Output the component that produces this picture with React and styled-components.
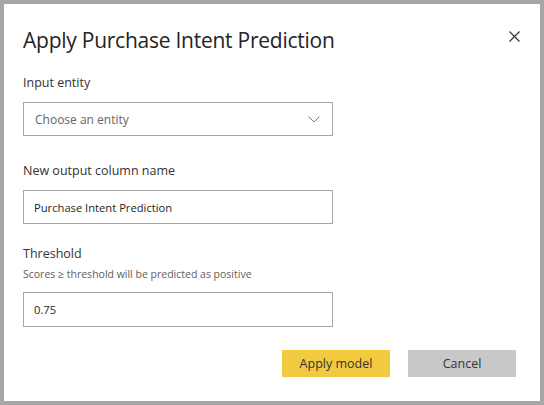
import React from "react";
import styled, { createGlobalStyle } from "styled-components";

const GlobalStyle = createGlobalStyle`
  html, body {
    margin: 0;
    padding: 0;
    background: #ffffff;
  }
  * { box-sizing: border-box; }
`;

const Dialog = styled.div`
  width: 544px;
  height: 405px;
  border: 4px solid #a6a6a6;
  background: #ffffff;
  padding: 21px 16px 0 19px;
  display: flex;
  flex-direction: column;
  font-family: "Open Sans", "Noto Sans", sans-serif;
  color: #252423;
`;

const Header = styled.div`
  display: flex;
  justify-content: space-between;
  align-items: flex-start;
`;

const Title = styled.h1`
  margin: 0;
  font-size: 21px;
  font-weight: 400;
  line-height: 30px;
  letter-spacing: -0.25px;
  color: #252423;
`;

const CloseButton = styled.button`
  border: none;
  background: transparent;
  padding: 0;
  width: 20px;
  height: 20px;
  margin-top: 1px;
  display: flex;
  align-items: center;
  justify-content: center;
  color: #333;
  cursor: pointer;
`;

const Field = styled.div`
  display: flex;
  flex-direction: column;
  width: 310px;
  margin-top: ${(p) => p.$top}px;
`;

const Label = styled.label`
  font-size: 12.5px;
  font-weight: 500;
  line-height: 20px;
  color: #333;
`;

const Hint = styled.div`
  font-size: 10.5px;
  line-height: 16px;
  color: #605e5c;
  margin-top: 2px;
`;

const Box = styled.div`
  width: 310px;
  height: ${(p) => p.$h}px;
  margin-top: ${(p) => p.$gap}px;
  border: 1px solid #a6a6a6;
  background: #fff;
  display: flex;
  align-items: center;
  justify-content: space-between;
  padding: 0 12px 0 ${(p) => p.$pl}px;
`;

const Placeholder = styled.span`
  font-size: 12px;
  color: #666;
`;

const Value = styled.span`
  font-size: 11.2px;
  color: #252423;
`;

const Footer = styled.div`
  display: flex;
  justify-content: flex-end;
  gap: 18px;
  margin-top: 23px;
  padding-right: 8px;
`;

const Button = styled.button`
  width: 108px;
  height: 27px;
  border: none;
  background: ${(p) => (p.$primary ? "#f2ca3f" : "#c8c8c8")};
  color: #333;
  font-family: "Open Sans", "Noto Sans", sans-serif;
  font-size: 12.5px;
  padding: 0;
  cursor: pointer;
`;

const Chevron = () => (
  <svg width="12" height="7" viewBox="0 0 12 7" fill="none">
    <path d="M0.6 0.7 L6 5.9 L11.4 0.7" stroke="#777" strokeWidth="1" />
  </svg>
);

const CloseIcon = () => (
  <svg width="11" height="11" viewBox="0 0 11 11" fill="none">
    <path d="M0.5 0.5 L10.5 10.5 M10.5 0.5 L0.5 10.5" stroke="#333" strokeWidth="1.2" />
  </svg>
);

export default function App() {
  return (
    <>
      <GlobalStyle />
      <Dialog>
        <Header>
          <Title>Apply Purchase Intent Prediction</Title>
          <CloseButton aria-label="Close">
            <CloseIcon />
          </CloseButton>
        </Header>

        <Field $top={18}>
          <Label>Input entity</Label>
          <Box $h={34} $gap={9} $pl={11}>
            <Placeholder>Choose an entity</Placeholder>
            <Chevron />
          </Box>
        </Field>

        <Field $top={25}>
          <Label>New output column name</Label>
          <Box $h={34} $gap={9} $pl={10}>
            <Value>Purchase Intent Prediction</Value>
          </Box>
        </Field>

        <Field $top={20}>
          <Label>Threshold</Label>
          <Hint>Scores ≥ threshold will be predicted as positive</Hint>
          <Box $h={35} $gap={10} $pl={10}>
            <Value>0.75</Value>
          </Box>
        </Field>

        <Footer>
          <Button $primary>Apply model</Button>
          <Button>Cancel</Button>
        </Footer>
      </Dialog>
    </>
  );
}
